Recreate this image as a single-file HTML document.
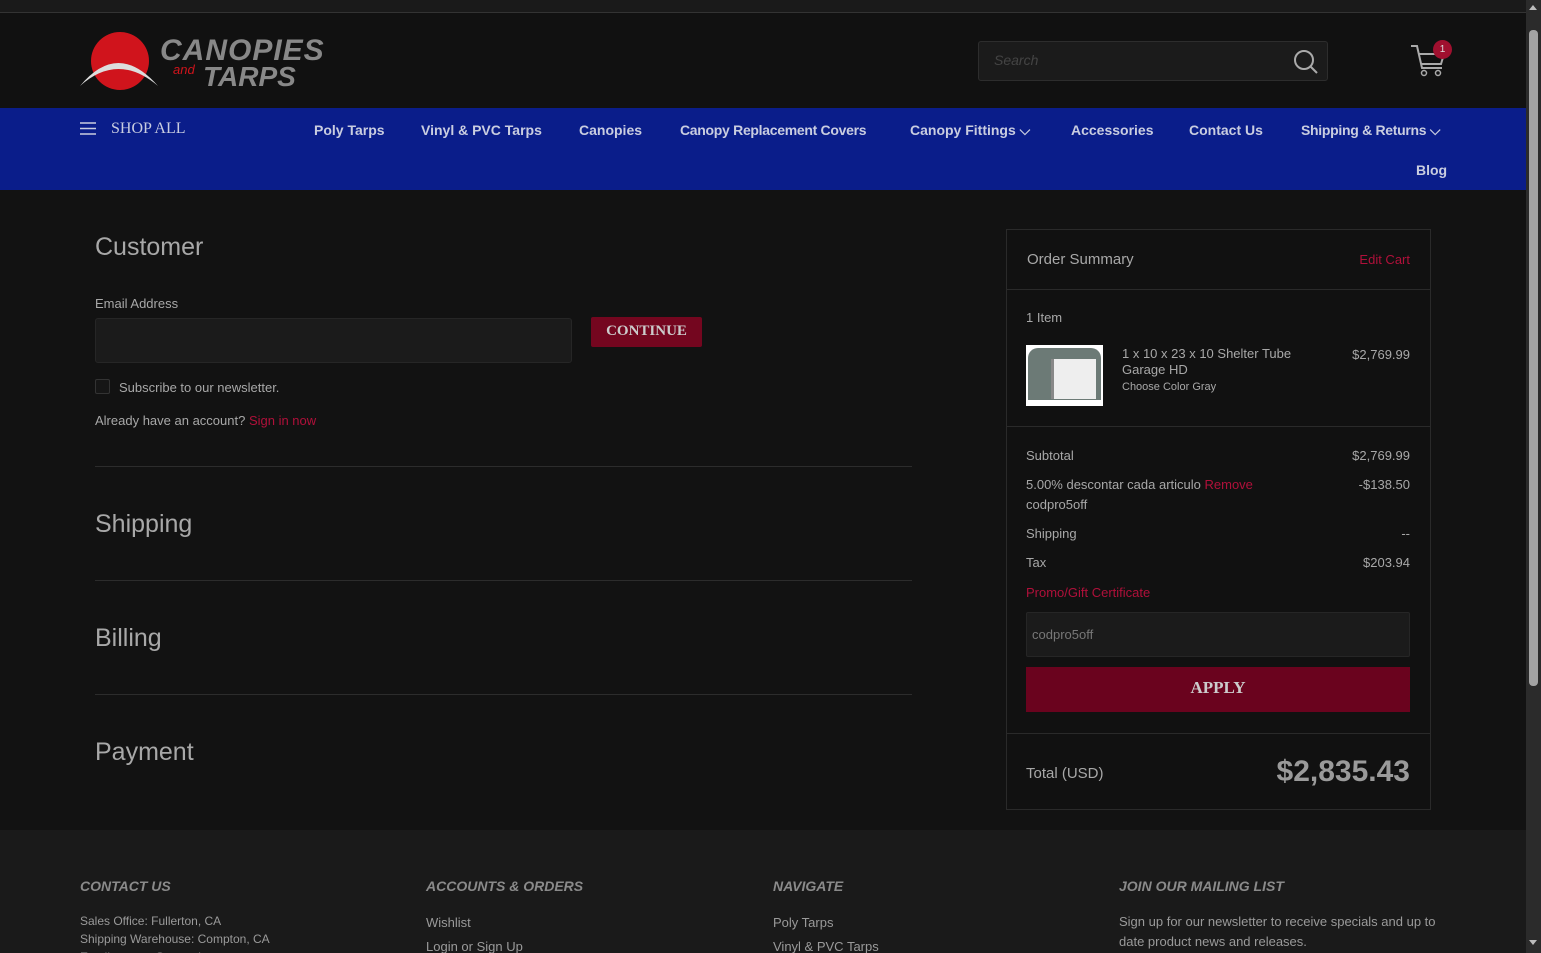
<!DOCTYPE html>
<html><head><meta charset="utf-8"><style>
*{box-sizing:border-box;margin:0;padding:0}
html,body{width:1541px;height:953px;overflow:hidden}
body{background:#121212;font-family:"Liberation Sans",sans-serif;color:#bbb;position:relative}
.abs{position:absolute}
.top{left:0;top:0;width:1526px;height:13px;background:#1a1a1a;border-bottom:1px solid #333}
.hdr{left:0;top:13px;width:1526px;height:95px;background:#111}
.nav{left:0;top:108px;width:1526px;height:82px;background:#0a1d8a}
.nav a{position:absolute;color:#c9cde0;font-size:14px;font-weight:bold;text-decoration:none;white-space:nowrap}
.main{left:0;top:190px;width:1526px;height:640px;background:#121212}
h2{position:absolute;font-weight:normal;font-size:25px;color:#a8a8a8}
.line{position:absolute;left:95px;width:817px;height:1px;background:#2c2c2c}
.sum{left:1006px;top:229px;width:425px;height:581px;border:1px solid #2a2a2a;background:#111}
.s{position:absolute;font-size:13px;color:#a8a8a8;white-space:nowrap}
.r{text-align:right;right:20px}
.red{color:#b0103a}
.foot{left:0;top:830px;width:1526px;height:123px;background:#1a1a1a}
.fh{position:absolute;top:878px;font-size:14px;font-weight:bold;font-style:italic;color:#8a8a8a}
.fl{position:absolute;font-size:13px;color:#9a9a9a;white-space:nowrap}
</style></head><body>
<div class="abs top"></div>
<div class="abs hdr"></div>
<svg class="abs" style="left:78px;top:30px" width="255" height="62">
<circle cx="42" cy="31" r="29" fill="#d0141c"/>
<path d="M2 56 Q40 10 80 56 Q40 22 2 56Z" fill="#ddd"/>
<text x="82" y="30" font-family="Liberation Sans" font-weight="bold" font-style="italic" font-size="30" fill="#888" letter-spacing="1">CANOPIES</text>
<text x="95" y="44" font-family="Liberation Sans" font-style="italic" font-size="13" fill="#d0141c">and</text>
<text x="125" y="56" font-family="Liberation Sans" font-weight="bold" font-style="italic" font-size="28" fill="#888">TARPS</text>
</svg>
<div class="abs" style="left:978px;top:41px;width:350px;height:40px;background:#1b1b1b;border:1px solid #2d2d2d;border-radius:3px"></div>
<div class="abs" style="left:994px;top:52px;font-size:14px;font-style:italic;color:#444">Search</div>
<svg class="abs" style="left:1293px;top:49px" width="26" height="26"><circle cx="11" cy="11" r="9" stroke="#aaa" stroke-width="2" fill="none"/><path d="M17 17 L24 24" stroke="#aaa" stroke-width="2"/></svg>
<svg class="abs" style="left:1408px;top:42px" width="40" height="36"><path d="M3 4 L9 4 L14 26 L34 26 M11 12 L36 12 L33 22 L13 22" stroke="#aaa" stroke-width="2" fill="none"/><circle cx="16" cy="31" r="2.5" stroke="#aaa" fill="none" stroke-width="1.5"/><circle cx="30" cy="31" r="2.5" stroke="#aaa" fill="none" stroke-width="1.5"/></svg>
<div class="abs" style="left:1433px;top:40px;width:19px;height:19px;border-radius:50%;background:#a0102f;color:#ddd;font-size:10px;text-align:center;line-height:19px">1</div>
<div class="abs nav">
<svg style="position:absolute;left:80px;top:14px" width="16" height="13"><path d="M0 1H16M0 6.5H16M0 12H16" stroke="#c9cde0" stroke-width="1.6"/></svg>
<a style="left:111px;top:12px;font-family:'Liberation Serif',serif;font-weight:normal;font-size:16px">SHOP ALL</a>
<a style="left:314px;top:14px">Poly Tarps</a>
<a style="left:421px;top:14px">Vinyl &amp; PVC Tarps</a>
<a style="left:579px;top:14px">Canopies</a>
<a style="left:680px;top:14px;letter-spacing:-0.3px">Canopy Replacement Covers</a>
<a style="left:910px;top:14px">Canopy Fittings ⌵</a>
<a style="left:1071px;top:14px">Accessories</a>
<a style="left:1189px;top:14px">Contact Us</a>
<a style="left:1301px;top:14px;letter-spacing:-0.3px">Shipping &amp; Returns ⌵</a>
<a style="left:1416px;top:54px">Blog</a>
</div>
<div class="abs main"></div>
<h2 style="left:95px;top:233px">Customer</h2>
<div class="s" style="left:95px;top:296px">Email Address</div>
<div class="abs" style="left:95px;top:318px;width:477px;height:45px;background:#1b1b1b;border:1px solid #262626;border-radius:3px"></div>
<div class="abs" style="left:591px;top:317px;width:111px;height:30px;background:#74061f;border-radius:2px;color:#ccc;font-family:'Liberation Serif',serif;font-weight:bold;font-size:15px;text-align:center;line-height:28px">CONTINUE</div>
<div class="abs" style="left:95px;top:379px;width:15px;height:15px;border:1px solid #333;border-radius:2px;background:#161616"></div>
<div class="s" style="left:119px;top:380px">Subscribe to our newsletter.</div>
<div class="s" style="left:95px;top:413px">Already have an account? <span class="red">Sign in now</span></div>
<div class="line" style="top:466px"></div>
<h2 style="left:95px;top:510px">Shipping</h2>
<div class="line" style="top:580px"></div>
<h2 style="left:95px;top:624px">Billing</h2>
<div class="line" style="top:694px"></div>
<h2 style="left:95px;top:738px">Payment</h2>
<div class="abs sum">
<div class="s" style="left:20px;top:21px;font-size:15px">Order Summary</div>
<div class="s r red" style="top:22px">Edit Cart</div>
<div class="abs" style="left:0;top:59px;width:423px;height:1px;background:#2a2a2a"></div>
<div class="s" style="left:19px;top:80px">1 Item</div>
<div class="abs" style="left:19px;top:115px;width:77px;height:61px;background:#fff"><div style="position:absolute;left:2px;top:3px;width:73px;height:52px;background:#6c7a76;border-radius:10px 10px 0 0"></div><div style="position:absolute;left:25px;top:14px;width:45px;height:40px;background:#eee;border-left:3px solid #888"></div></div>
<div class="s" style="left:115px;top:116px;line-height:16px">1 x 10 x 23 x 10 Shelter Tube<br>Garage HD<br><span style="font-size:11px">Choose Color Gray</span></div>
<div class="s r" style="top:117px">$2,769.99</div>
<div class="abs" style="left:0;top:196px;width:423px;height:1px;background:#2a2a2a"></div>
<div class="s" style="left:19px;top:218px">Subtotal</div><div class="s r" style="top:218px">$2,769.99</div>
<div class="s" style="left:19px;top:245px;line-height:20px">5.00% descontar cada articulo <span class="red">Remove</span><br>codpro5off</div><div class="s r" style="top:247px">-$138.50</div>
<div class="s" style="left:19px;top:296px">Shipping</div><div class="s r" style="top:296px">--</div>
<div class="s" style="left:19px;top:325px">Tax</div><div class="s r" style="top:325px">$203.94</div>
<div class="s red" style="left:19px;top:355px">Promo/Gift Certificate</div>
<div class="abs" style="left:19px;top:382px;width:384px;height:45px;background:#1b1b1b;border:1px solid #262626;border-radius:2px"></div>
<div class="s" style="left:25px;top:397px;color:#777">codpro5off</div>
<div class="abs" style="left:19px;top:437px;width:384px;height:45px;background:#6a031e;color:#ccc;font-family:'Liberation Serif',serif;font-weight:bold;font-size:17px;text-align:center;line-height:42px">APPLY</div>
<div class="abs" style="left:0;top:503px;width:423px;height:1px;background:#2a2a2a"></div>
<div class="s" style="left:19px;top:535px;font-size:15px">Total (USD)</div>
<div class="s r" style="top:525px;font-size:30px;font-weight:bold;color:#9a9a9a">$2,835.43</div>
</div>
<div class="abs foot"></div>
<div class="fh" style="left:80px">CONTACT US</div>
<div class="fh" style="left:426px">ACCOUNTS &amp; ORDERS</div>
<div class="fh" style="left:773px">NAVIGATE</div>
<div class="fh" style="left:1119px">JOIN OUR MAILING LIST</div>
<div class="fl" style="left:80px;top:912px;font-size:12px;line-height:18px">Sales Office: Fullerton, CA<br>Shipping Warehouse: Compton, CA<br>Email support@canopies.com</div>
<div class="fl" style="left:426px;top:911px;line-height:24px">Wishlist<br>Login or Sign Up</div>
<div class="fl" style="left:773px;top:911px;line-height:24px">Poly Tarps<br>Vinyl &amp; PVC Tarps</div>
<div class="fl" style="left:1119px;top:912px;line-height:20px">Sign up for our newsletter to receive specials and up to<br>date product news and releases.</div>
<div class="abs" style="left:1526px;top:0;width:15px;height:953px;background:#2b2b2b"></div>
<div class="abs" style="left:1529px;top:30px;width:9px;height:656px;background:#a3a3a3;border-radius:4px"></div>
<div class="abs" style="left:1529px;top:5px;width:0;height:0;border-left:4px solid transparent;border-right:4px solid transparent;border-bottom:5px solid #bbb"></div>
<div class="abs" style="left:1529px;top:940px;width:0;height:0;border-left:4px solid transparent;border-right:4px solid transparent;border-top:5px solid #bbb"></div>
</body></html>
